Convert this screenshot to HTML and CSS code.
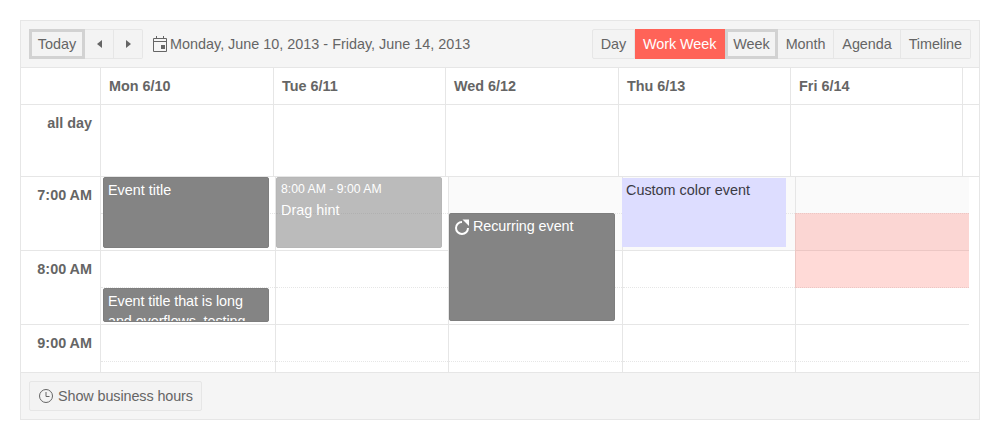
FILE: index.html
```html
<!DOCTYPE html>
<html lang="en">
<head>
    <meta charset="UTF-8">
    <meta name="viewport" content="width=device-width, initial-scale=1.0">
    <title>Scheduler</title>
    <link rel="stylesheet" href="styles.css">
</head>
<body>
    <div class="scheduler">
        <!-- Toolbar -->
        <div class="toolbar">
            <div class="btn-group">
                <button class="btn btn-today">Today</button>
                <button class="btn btn-nav" aria-label="Previous">
                    <svg width="7" height="8" viewBox="0 0 7 8"><path d="M6 0v8L1 4z"/></svg>
                </button>
                <button class="btn btn-nav" aria-label="Next">
                    <svg width="7" height="8" viewBox="0 0 7 8"><path d="M1 0v8l5-4z"/></svg>
                </button>
            </div>
            <div class="date-range">
                <svg class="cal-icon" width="16" height="16" viewBox="0 0 16 16">
                    <path d="M1.5 2.5h13v13h-13z" fill="none" stroke="#656565"/>
                    <path d="M1 5h14v1H1zM4 0h1v3H4zM11 0h1v3h-1zM9 9h4v4H9z" fill="#656565"/>
                </svg>
                <span>Monday, June 10, 2013 - Friday, June 14, 2013</span>
            </div>
            <div class="btn-group views">
                <button class="btn">Day</button>
                <button class="btn btn-selected">Work Week</button>
                <button class="btn btn-focused">Week</button>
                <button class="btn">Month</button>
                <button class="btn">Agenda</button>
                <button class="btn">Timeline</button>
            </div>
        </div>

        <!-- Day headers -->
        <div class="head-row">
            <div class="head-corner"></div>
            <div class="head-day">Mon 6/10</div>
            <div class="head-day">Tue 6/11</div>
            <div class="head-day">Wed 6/12</div>
            <div class="head-day">Thu 6/13</div>
            <div class="head-day">Fri 6/14</div>
        </div>

        <!-- All day row -->
        <div class="allday-row">
            <div class="allday-label">all day</div>
            <div class="allday-cell"></div>
            <div class="allday-cell"></div>
            <div class="allday-cell"></div>
            <div class="allday-cell"></div>
            <div class="allday-cell"></div>
        </div>

        <!-- Time grid -->
        <div class="time-grid">
            <div class="time-col">
                <div class="time-label">7:00 AM</div>
                <div class="time-label">8:00 AM</div>
                <div class="time-label">9:00 AM</div>
            </div>

            <div class="day-col">
                <div class="slot"></div><div class="slot"></div>
                <div class="slot"></div><div class="slot"></div>
                <div class="slot"></div><div class="slot"></div>
                <div class="event event-mon-1"><div class="event-title">Event title</div></div>
                <div class="event event-mon-2"><div class="event-title">Event title that is long and overflows, testing</div></div>
            </div>

            <div class="day-col">
                <div class="slot"></div><div class="slot"></div>
                <div class="slot"></div><div class="slot"></div>
                <div class="slot"></div><div class="slot"></div>
                <div class="event event-hint">
                    <div class="event-time">8:00 AM - 9:00 AM</div>
                    <div class="event-title">Drag hint</div>
                </div>
            </div>

            <div class="day-col">
                <div class="slot off"></div><div class="slot off"></div>
                <div class="slot"></div><div class="slot"></div>
                <div class="slot"></div><div class="slot"></div>
                <div class="event event-recur">
                    <div class="event-title">
                        <svg class="recur-icon" width="16" height="16" viewBox="0 0 16 16">
                            <path d="M8 3A6 6 0 1 0 14 9" fill="none" stroke="#fff" stroke-width="2"/>
                            <path d="M8.5 .5H15V7z" fill="#fff"/>
                        </svg>
                        Recurring event
                    </div>
                </div>
            </div>

            <div class="day-col">
                <div class="slot off"></div><div class="slot off"></div>
                <div class="slot"></div><div class="slot"></div>
                <div class="slot"></div><div class="slot"></div>
                <div class="event event-custom"><div class="event-title">Custom color event</div></div>
            </div>

            <div class="day-col day-last">
                <div class="slot off"></div><div class="slot off"></div>
                <div class="slot"></div><div class="slot"></div>
                <div class="slot"></div><div class="slot"></div>
                <div class="range-pink"></div>
            </div>
        </div>

        <!-- Footer -->
        <div class="footer">
            <button class="btn btn-single">
                <svg width="16" height="16" viewBox="0 0 16 16">
                    <circle cx="8" cy="8" r="6.5" fill="none" stroke="#656565"/>
                    <path d="M8 4v4.5h3.5" fill="none" stroke="#656565"/>
                </svg>
                Show business hours
            </button>
        </div>
    </div>
</body>
</html>
```

FILE: styles.css
```css
* {
    margin: 0;
    padding: 0;
    box-sizing: border-box;
}

body {
    font-family: "Liberation Sans", Arial, sans-serif;
    font-size: 14.4px;
    color: #656565;
    background-color: #fff;
    padding: 20px;
}

.scheduler {
    width: 960px;
    height: 400px;
    border: 1px solid #e6e6e6;
    display: flex;
    flex-direction: column;
    overflow: hidden;
}

/* Toolbar */
.toolbar {
    height: 47px;
    flex: none;
    display: flex;
    align-items: center;
    padding: 0 8px;
    background-color: #f5f5f5;
    border-bottom: 1px solid #e6e6e6;
}

.btn-group {
    display: flex;
}

.views {
    margin-left: auto;
    letter-spacing: -0.06px;
}

.btn {
    font: inherit;
    letter-spacing: inherit;
    height: 30px;
    padding: 0 8px;
    display: flex;
    align-items: center;
    color: #656565;
    background-color: #f3f3f3;
    border: 1px solid #e6e6e6;
    border-left-width: 0;
}

.btn-group .btn:first-child {
    border-left-width: 1px;
    border-radius: 2px 0 0 2px;
}

.btn-group .btn:last-child {
    border-radius: 0 2px 2px 0;
}

.btn-nav {
    width: 29px;
    padding: 0;
    justify-content: center;
}

.btn-nav svg {
    fill: #656565;
}

.btn-today {
    width: 56px;
    padding: 0;
    justify-content: center;
    border: 3px solid #d2d2d2 !important;
    border-radius: 0 !important;
}

.btn-selected {
    background-color: #ff6358;
    color: #fff;
    border-color: #ff6358;
}

.btn-focused {
    border: 3px solid #d2d2d2 !important;
    padding: 0 5px;
}

.btn-single {
    letter-spacing: -0.1px;
    border-left-width: 1px;
    border-radius: 2px;
    padding: 0 8px;
    gap: 4px;
}

.date-range {
    display: flex;
    align-items: center;
    margin-left: 9px;
    gap: 2px;
}

/* Header and all day rows share the same columns */
.head-row,
.allday-row {
    display: grid;
    grid-template-columns: 80px 173px 172px 173px 172px 172px;
    flex: none;
    background-color: #fff;
    border-bottom: 1px solid #e6e6e6;
}

.head-row {
    height: 37px;
}

.allday-row {
    height: 72px;
}

.head-corner,
.head-day,
.allday-label,
.allday-cell {
    border-right: 1px solid #e6e6e6;
}

.head-day {
    font-weight: bold;
    padding: 10px 8px 0;
}

.allday-label {
    font-weight: bold;
    text-align: right;
    padding: 10px 8px 0 0;
}

/* Time grid */
.time-grid {
    display: grid;
    grid-template-columns: 80px 175px 173px 174px 173px 173px;
    width: 948px;
    height: 195px;
    flex: none;
    overflow: hidden;
}

.time-col {
    border-right: 1px solid #e6e6e6;
}

.time-label {
    height: 74px;
    font-weight: bold;
    text-align: right;
    padding: 10px 8px 0 0;
    border-bottom: 1px solid #e6e6e6;
}

.day-col {
    position: relative;
    border-right: 1px solid #e6e6e6;
}

.day-last {
    border-right: 0;
}

.slot {
    height: 37px;
    border-bottom: 1px dotted #e6e6e6;
}

.slot:nth-child(2n) {
    border-bottom: 1px solid #e6e6e6;
}

.off {
    background-color: #fafafa;
}

/* Events sit on top of the slots */
.event {
    position: absolute;
    width: 166px;
    color: #fff;
    background-color: #848484;
    border: 1px solid #7e7e7e;
    border-radius: 2px;
    padding: 2px 4px;
    overflow: hidden;
    line-height: 20px;
}

.event-mon-1 {
    left: 2px;
    top: 0;
    height: 71px;
}

.event-mon-2 {
    left: 2px;
    top: 111px;
    height: 34px;
    letter-spacing: -0.08px;
}

.event-hint {
    left: 0;
    top: 0;
    height: 71px;
    padding-top: 3px;
    opacity: 0.55;
}

.event-time {
    font-size: 12.24px;
    line-height: 16px;
    margin-bottom: 3px;
}

.event-recur {
    left: 0;
    top: 36px;
    height: 108px;
    letter-spacing: -0.07px;
}

.recur-icon {
    vertical-align: -4px;
    margin-right: -1px;
}

.event-custom {
    left: -1px;
    top: 1px;
    width: 164px;
    height: 69px;
    color: #3a3a44;
    background-color: #ddf;
    border: 0;
    border-radius: 0;
}

.range-pink {
    position: absolute;
    left: -1px;
    right: 0;
    top: 36px;
    height: 75px;
    background-color: rgba(255, 99, 88, 0.24);
}

/* Footer */
.footer {
    flex: 1;
    display: flex;
    align-items: center;
    padding: 0 8px;
    background-color: #f5f5f5;
    border-top: 1px solid #e6e6e6;
}
```
